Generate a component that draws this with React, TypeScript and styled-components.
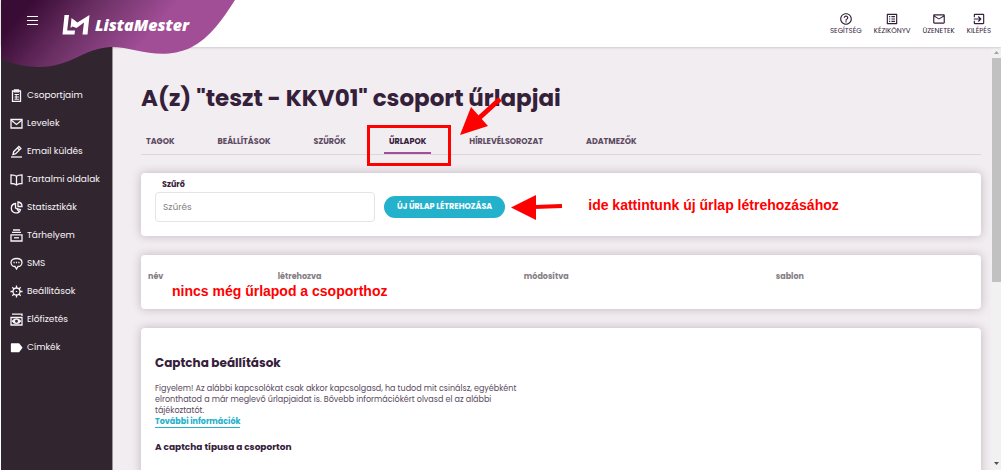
import React from "react";
import styled, { createGlobalStyle } from "styled-components";
import { MdExitToApp, MdHelpOutline, MdListAlt, MdMailOutline } from "react-icons/md";

const GlobalStyle = createGlobalStyle`
  *, *::before, *::after { box-sizing: border-box; }
  body { margin: 0; background: #fff; }
  body, button, input { font-family: Poppins, Inter, "Noto Sans", sans-serif; }
`;

const Shell = styled.div`
  display: flex;
  flex-direction: column;
  height: 100vh;
  overflow: hidden;
  padding-left: 1px;
  color: #35203a;
`;

const Header = styled.header`
  position: relative;
  z-index: 2;
  display: flex;
  align-items: center;
  justify-content: space-between;
  height: 47px;
  flex: none;
  padding: 0 10px 0 26px;
  background: #fff;
  box-shadow: 0 0 3px rgba(0, 0, 0, 0.25);
`;

const Wave = styled.svg`
  position: absolute;
  top: 0;
  left: 0;
`;

const Brand = styled.div`
  position: relative;
  display: flex;
  align-items: center;
  padding-bottom: 4px;
`;

const MenuButton = styled.button`
  display: grid;
  gap: 2px;
  width: 11px;
  margin: 0 24px 3px 0;
  padding: 0;
  border: 0;
  background: none;
  span {
    height: 1px;
    background: #fff;
  }
  span:nth-child(2) {
    margin: 1px 0;
  }
`;

const BrandLink = styled.a`
  display: flex;
  align-items: center;
  gap: 5px;
  padding-top: 6px;
  color: #fff;
  text-decoration: none;
  font: italic 800 16px/20px "Open Sans", "Noto Sans", sans-serif;
`;

const Tools = styled.nav`
  display: flex;
  gap: 12px;
`;

const Tool = styled.a`
  display: flex;
  flex-direction: column;
  align-items: center;
  color: #35203a;
  text-decoration: none;
  font-size: 7px;
  line-height: 10px;
  svg {
    width: 14px;
    height: 14px;
  }
`;

const Body = styled.div`
  display: flex;
  flex: 1;
  min-height: 0;
`;

const Sidebar = styled.nav`
  display: flex;
  flex-direction: column;
  flex: none;
  width: 112px;
  padding: 34px 0 0 9px;
  background: #31252f;
  border-right: 1px solid #99929a;
`;

const SideLink = styled.a`
  display: flex;
  align-items: center;
  gap: 4px;
  height: 28px;
  color: #f8f5f8;
  text-decoration: none;
  white-space: nowrap;
  font-size: 9px;
  line-height: 14px;
`;

const Main = styled.main`
  flex: 1;
  min-width: 0;
  padding: 35px 10px 0 28px;
  overflow: hidden;
  background: #f2edf1;
`;

const Title = styled.h1`
  margin: 0;
  font-size: 23px;
  line-height: 32px;
  font-weight: 700;
  white-space: nowrap;
`;

const Tabs = styled.nav`
  display: flex;
  gap: 33px;
  height: 26px;
  margin: 15px 0 18px;
  border-bottom: 1px solid #dcd6dc;
`;

const Tab = styled.a<{ $active?: boolean }>`
  position: relative;
  height: 25px;
  padding: 0 5px;
  border-bottom: 2px solid ${(p) => (p.$active ? "#a04f98" : "transparent")};
  color: ${(p) => (p.$active ? "#35203a" : "#5b4a60")};
  text-decoration: none;
  white-space: nowrap;
  font-size: 8px;
  line-height: 26px;
  font-weight: 700;
`;

const Highlight = styled.span`
  position: absolute;
  inset: -4px -20px -14px -17px;
  border: 3px solid #fe0000;
`;

const TabArrow = styled.svg`
  position: absolute;
  left: 75px;
  top: -32px;
`;

const Card = styled.section`
  margin-bottom: 19px;
  border-radius: 4px;
  background: #fff;
  box-shadow: 0 0 10px rgba(60, 40, 60, 0.28);
`;

const FilterCard = styled(Card)`
  display: flex;
  align-items: flex-end;
  height: 63px;
  padding: 0 14px 14px;
`;

const Field = styled.label`
  display: flex;
  flex-direction: column;
  width: 220px;
  font-size: 8px;
  line-height: 12px;
  font-weight: 700;
  span {
    padding: 0 0 1px 7px;
  }
`;

const TextInput = styled.input`
  width: 100%;
  height: 30px;
  padding: 0 7px;
  border: 1px solid #e6e3e6;
  border-radius: 4px;
  font-size: 9px;
  outline: none;
  &::placeholder {
    color: #858085;
    opacity: 1;
  }
`;

const CreateButton = styled.button`
  height: 22px;
  margin: 0 5px 4px 9px;
  padding: 0 13px;
  border: 0;
  border-radius: 11px;
  background: #24b1cc;
  color: #fff;
  font-size: 8px;
  font-weight: 700;
  white-space: nowrap;
`;

const Note = styled.span`
  color: #fe0000;
  font: 700 14px/16px "Liberation Sans", Arial, sans-serif;
  white-space: nowrap;
`;

const SideNote = styled(Note)`
  margin: 0 0 9px 25px;
`;

const ListCard = styled(Card)`
  height: 54px;
  padding: 16px 7px 0;
`;

const List = styled.table`
  width: 100%;
  table-layout: fixed;
  border-collapse: collapse;
  th,
  td {
    padding: 0;
    text-align: left;
  }
  th {
    color: #858085;
    font-size: 8px;
    line-height: 12px;
  }
  td {
    padding-left: 24px;
    line-height: 14px;
  }
`;

const Col = styled.col<{ $share: number }>`
  width: ${(p) => p.$share}%;
`;

const CaptchaCard = styled(Card)`
  padding: 26px 14px 40px;
`;

const CardTitle = styled.h2`
  margin: 0 0 11px;
  font-size: 12px;
  line-height: 18px;
`;

const Info = styled.p`
  max-width: 378px;
  margin: 0;
  color: #5b4a60;
  font-size: 8px;
  line-height: 11px;
`;

const MoreLink = styled.a`
  display: inline-block;
  border-bottom: 1px solid #24b1cc;
  color: #24b1cc;
  text-decoration: none;
  font-weight: 700;
`;

const SubTitle = styled.h3`
  margin: 12px 0 0;
  font-size: 9px;
  line-height: 14px;
`;

const Scrollbar = styled.div`
  display: flex;
  flex-direction: column;
  align-items: center;
  flex: none;
  width: 10px;
  padding: 4px 0 5px;
  background: #f1f1f1;
`;

const Thumb = styled.div`
  width: 9px;
  height: 54%;
  margin: 4px 0 auto;
  background: #c1c1c1;
`;

const sideItems: [string, React.ReactNode][] = [
  ["Csoportjaim", <><path d="M4 2H2.500v10.500h8V2H9" /><path d="M4.500 1h4v1.800h-4z" fill="currentColor" /><path d="M4.500 5.500h4.500M4.500 8h4.500M4.500 10.200h4.500M6.200 5.500v4.700" strokeWidth="1" /></>],
  ["Levelek", <><path d="M1 2.500h11v8.500H1z" /><path d="M1 3l5.500 4.500L12 3" /></>],
  ["Email küldés", <><path d="M1 12h11" /><path d="M3 9.500l.7-2.800 5.200-5.200 2 2-5.200 5.200zM7.500 3l2 2" /></>],
  ["Tartalmi oldalak", <path d="M6.500 3.200C5 2 3 1.800 1 1.800v8.700c2 0 4 .2 5.500 1.500C8 10.700 10 10.500 12 10.500V1.800c-2 0-4 .2-5.500 1.400zV12" />],
  ["Statisztikák", <><path d="M5.500 2.500a4.700 4.700 0 1 0 5 6.200L5.500 7z" /><path d="M8 1v4.500h4A4.500 4.500 0 0 0 8 1zM7 8l2.500 3" /></>],
  ["Tárhelyem", <><path d="M3 1h7M2 3.300h9M1 5.800h11v6.200H1z" /><path d="M4 8.800h5" /></>],
  ["SMS", <><path d="M6.500 1.500c3.200 0 5.500 1.600 5.500 4s-2 4-4 4l-1.500 2.500L5 9.500c-2 0-4-1.600-4-4s2.300-4 5.500-4z" /><path d="M3.500 5.500h1.200M5.900 5.500h1.200M8.300 5.500h1.200" strokeWidth="1.500" /></>],
  ["Beállítások", <><circle cx="6.500" cy="6.500" r="3.500" /><path d="M6.500 0.500v2.500M6.500 10v2.500M0.500 6.500H3M10 6.500h2.500M2.300 2.300L4 4M9 9l1.700 1.700M10.700 2.300L9 4M4 9l-1.700 1.700M6.500 6v1" /></>],
  ["Előfizetés", <><path d="M2 1.200h10V3M1 4.500h11v7.500H1z" /><path d="M2.500 8.200c2-3 6-3 8 0-2 3-6 3-8 0z" fill="currentColor" /><circle cx="6.500" cy="8.200" r=".8" stroke="#31252f" /></>],
  ["Címkék", <path d="M1.500 3h7.300l3 3.700-3 3.800H1.500z" fill="#fff" stroke="#fff" strokeLinejoin="round" />],
];

const tools = [
  { label: "SEGÍTSÉG", Icon: MdHelpOutline },
  { label: "KÉZIKÖNYV", Icon: MdListAlt },
  { label: "ÜZENETEK", Icon: MdMailOutline },
  { label: "KILÉPÉS", Icon: MdExitToApp },
];

const tabs = ["TAGOK", "BEÁLLÍTÁSOK", "SZŰRŐK", "ŰRLAPOK", "HÍRLEVÉLSOROZAT", "ADATMEZŐK"];

export default function App() {
  return (
    <Shell>
      <GlobalStyle />
      <Header>
        <Wave width="236" height="68" viewBox="0 0 236 68" aria-hidden="true">
          <defs>
            <linearGradient id="wave" gradientUnits="userSpaceOnUse" x1="20" y1="15" x2="115" y2="95">
              <stop offset="0" stopColor="#390c35" />
              <stop offset="0.400" stopColor="#6a2f63" />
              <stop offset="0.900" stopColor="#a14e97" />
            </linearGradient>
          </defs>
          <path fill="url(#wave)" d="M0 0H234C222 19 209 38 190 47.500C158 62 136 47 110 47C83 48 70 67 38 67C22 67 10 63 0 58.500Z" />
        </Wave>
        <Brand>
          <MenuButton aria-label="Menü">
            <span />
            <span />
            <span />
          </MenuButton>
          <BrandLink href="#">
            <svg width="28" height="21" viewBox="0 0 28 21" fill="#fff" aria-hidden="true">
              <path d="M2.500 1H7L5.200 16.500H13L12.500 20.500H0.500Z" />
              <path d="M9.500 4L15.500 8.500L27.500 1L25.500 20.500H20.500L22 8.500L14.500 14L10.500 12.500L8.500 14Z" />
            </svg>
            ListaMester
          </BrandLink>
        </Brand>
        <Tools>
          {tools.map(({ label, Icon }) => (
            <Tool href="#" key={label}>
              <Icon />
              {label}
            </Tool>
          ))}
        </Tools>
      </Header>
      <Body>
        <Sidebar>
          {sideItems.map(([label, drawing]) => (
            <SideLink href="#" key={label}>
              <svg width="13" height="13" viewBox="0 0 13 13" fill="none" stroke="currentColor" strokeWidth="1.300" aria-hidden="true">
                {drawing}
              </svg>
              {label}
            </SideLink>
          ))}
        </Sidebar>
        <Main>
          <Title>A(z) "teszt - KKV01" csoport űrlapjai</Title>
          <Tabs>
            {tabs.map((label) => (
              <Tab href="#" key={label} $active={label === "ŰRLAPOK"}>
                {label}
                {label === "ŰRLAPOK" && (
                  <>
                    <Highlight />
                    <TabArrow width="44" height="40" viewBox="0 0 44 40" aria-hidden="true">
                      <path d="M1 38L12 10L29 29Z" fill="#fe0000" />
                      <path d="M18 23L41 2" stroke="#fe0000" strokeWidth="5" />
                    </TabArrow>
                  </>
                )}
              </Tab>
            ))}
          </Tabs>
          <FilterCard>
            <Field>
              <span>Szűrő</span>
              <TextInput type="text" placeholder="Szűrés" />
            </Field>
            <CreateButton>ÚJ ŰRLAP LÉTREHOZÁSA</CreateButton>
            <svg width="53" height="30" viewBox="0 0 53 30" aria-hidden="true">
              <path d="M1 15.500L26 3V28Z" fill="#fe0000" />
              <path d="M24 15L52 14" stroke="#fe0000" strokeWidth="4" />
            </svg>
            <SideNote>ide kattintunk új űrlap létrehozásához</SideNote>
          </FilterCard>
          <ListCard>
            <List>
              <colgroup>
                <Col $share={15.7} />
                <Col $share={29.8} />
                <Col $share={30.5} />
                <Col $share={24} />
              </colgroup>
              <thead>
                <tr>
                  <th>név</th>
                  <th>létrehozva</th>
                  <th>módosítva</th>
                  <th>sablon</th>
                </tr>
              </thead>
              <tbody>
                <tr>
                  <td colSpan={4}>
                    <Note>nincs még űrlapod a csoporthoz</Note>
                  </td>
                </tr>
              </tbody>
            </List>
          </ListCard>
          <CaptchaCard>
            <CardTitle>Captcha beállítások</CardTitle>
            <Info>
              Figyelem! Az alábbi kapcsolókat csak akkor kapcsolgasd, ha tudod mit csinálsz, egyébként
              elronthatod a már meglevő űrlapjaidat is. Bővebb információkért olvasd el az alábbi tájékoztatót.
              <br />
              <MoreLink href="#">További információk</MoreLink>
            </Info>
            <SubTitle>A captcha típusa a csoporton</SubTitle>
          </CaptchaCard>
        </Main>
        <Scrollbar aria-hidden="true">
          <svg width="5" height="3" viewBox="0 0 5 3" fill="#a3a3a3"><path d="M0 3L2.500 0L5 3Z" /></svg>
          <Thumb />
          <svg width="5" height="3" viewBox="0 0 5 3" fill="#505050"><path d="M0 0H5L2.500 3Z" /></svg>
        </Scrollbar>
      </Body>
    </Shell>
  );
}
